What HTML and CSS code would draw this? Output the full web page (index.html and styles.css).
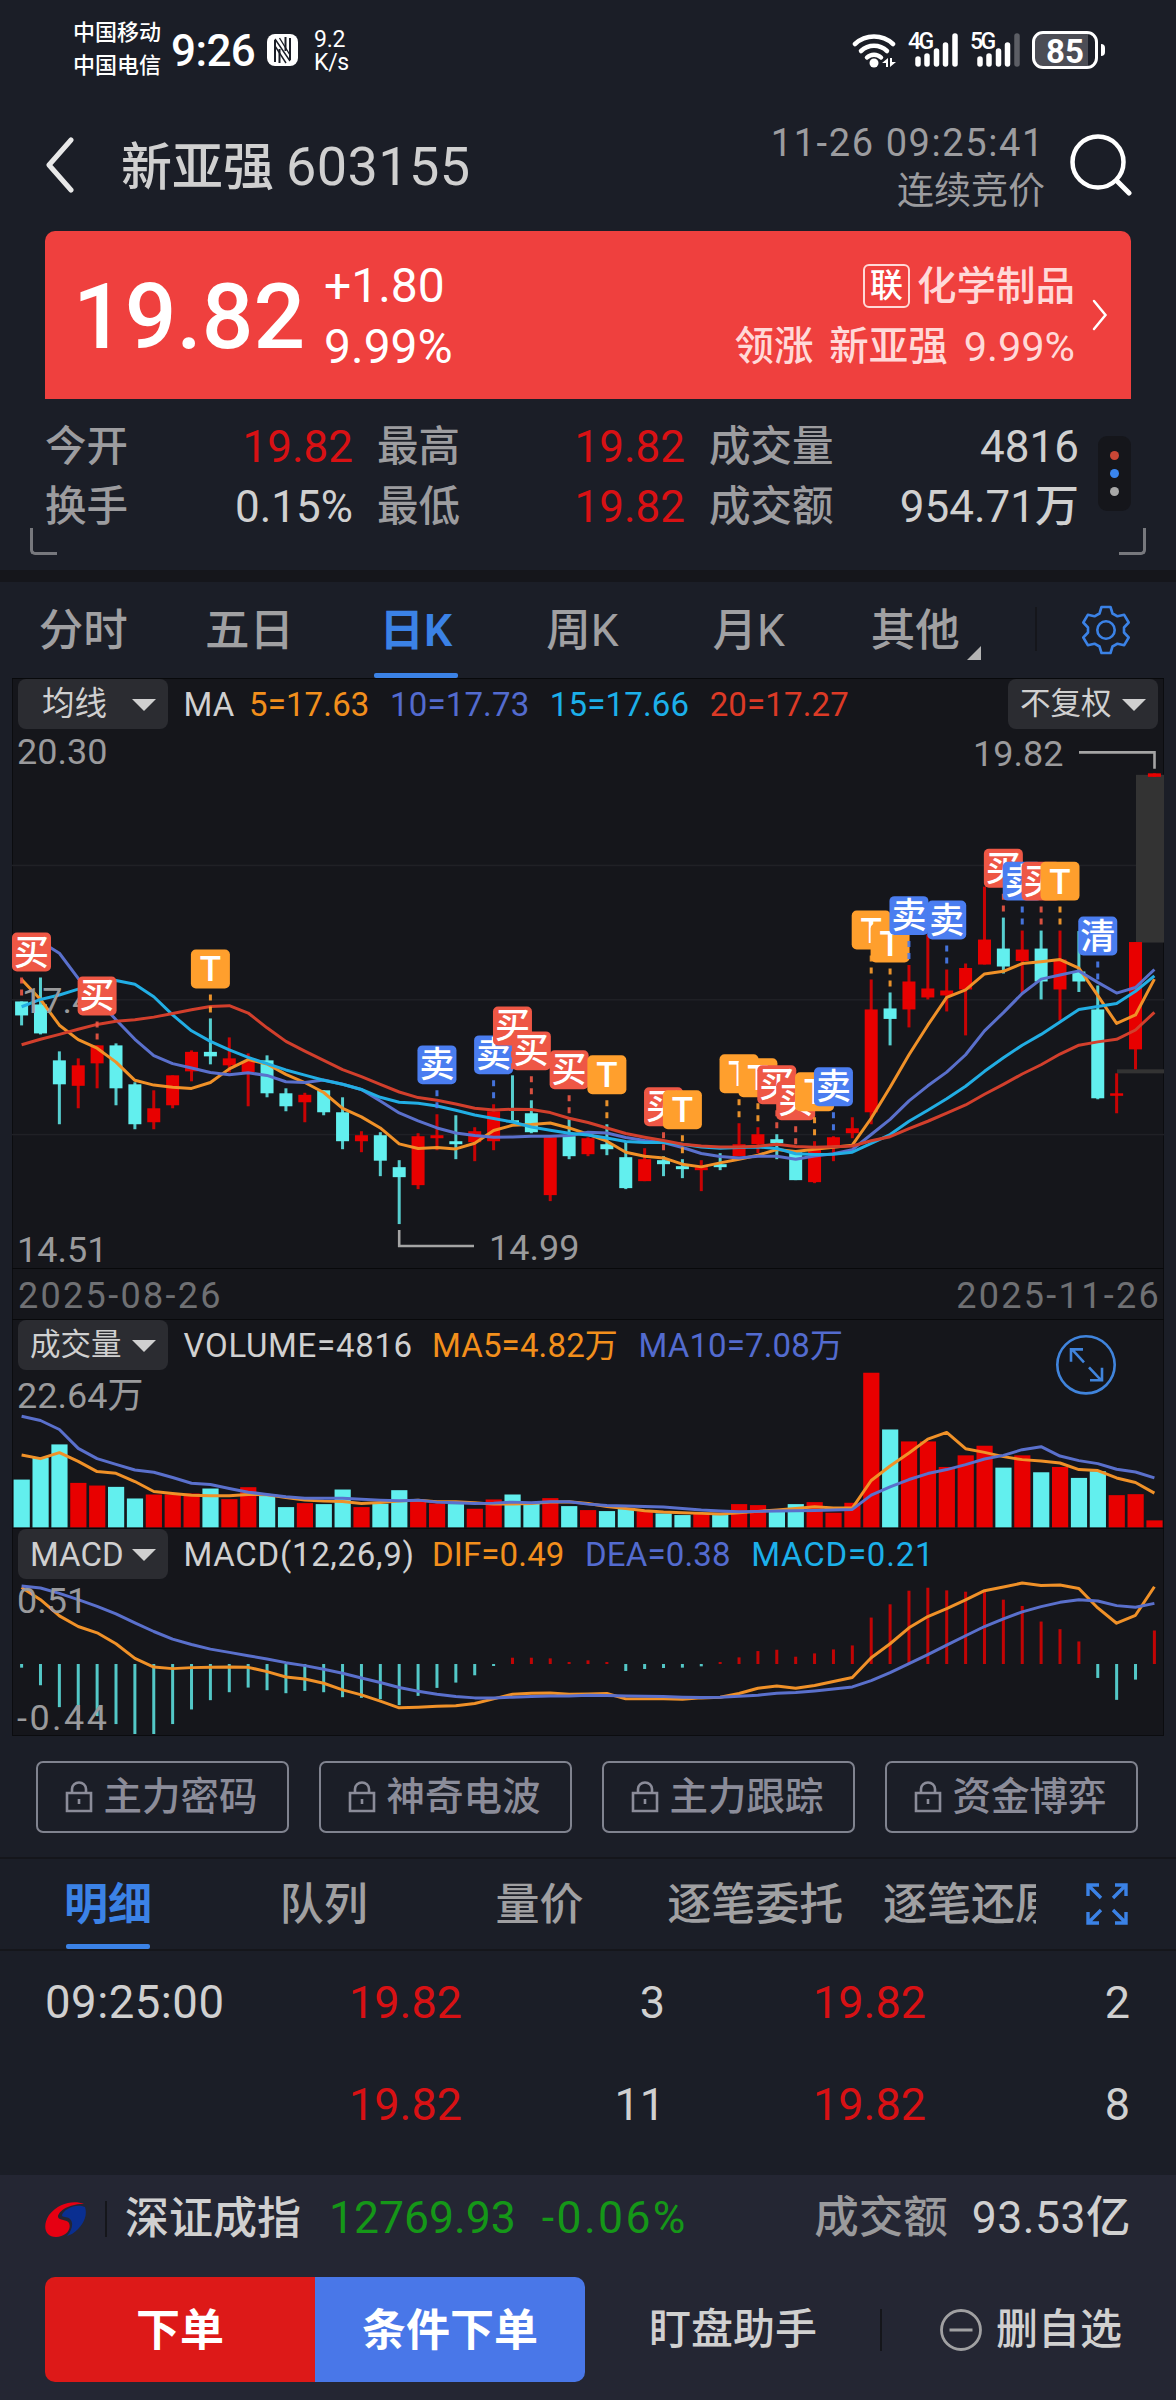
FILE: index.html
```html
<!DOCTYPE html>
<html lang="zh-CN">
  <head>
    <meta charset="UTF-8" />
    <meta name="viewport" content="width=device-width, initial-scale=1.0" />
    <title>新亚强 603155</title>
    <link rel="stylesheet" href="styles.css" />
  </head>
  <body>
    <div class="status-bar">
      <div class="carriers"><span>中国移动</span><span>中国电信</span></div>
      <span class="clock">9:26</span>
      <svg class="nfc" viewBox="0 0 31 32">
        <rect width="31" height="32" rx="8" fill="#fff" />
        <path d="M8 28V6M12.500 15v14M18.500 3v14M23 4v22" stroke="#1b1e27" stroke-width="2" />
        <path d="M8 5l15 22M12.500 4l10.500 17M8 12l11 17" stroke="#1b1e27" stroke-width="1.400" />
      </svg>
      <div class="net-speed"><span>9.2</span><span>K/s</span></div>
      <svg class="wifi" viewBox="0 0 46 36">
        <g fill="none" stroke="#fff" stroke-width="4.500" stroke-linecap="round">
          <path d="M3 12a28 28 0 0 1 38 0" />
          <path d="M9 19a19 19 0 0 1 26 0" />
          <path d="M15 25.500a10 10 0 0 1 14 0" />
        </g>
        <circle cx="22" cy="31" r="4.500" fill="#fff" />
        <path d="M30 31l6-5v9h-2v-4zM44 30l-6 5v-9h2v4z" fill="#fff" />
      </svg>
      <div class="signal">
        <span>4G</span>
        <svg viewBox="0 0 43 34">
          <path d="M3 26v5M12 23v8M21.500 18v13M30.500 12v19M40 3v28" stroke="#fff" stroke-width="5.500" stroke-linecap="round" />
        </svg>
      </div>
      <div class="signal signal-5g">
        <span>5G</span>
        <svg viewBox="0 0 43 34">
          <path d="M3 26v5M12 23v8M21.500 18v13M30.500 12v19" stroke="#fff" stroke-width="5.500" stroke-linecap="round" />
          <path d="M40 3v28" stroke="#5c5e65" stroke-width="5.500" stroke-linecap="round" />
        </svg>
      </div>
      <div class="battery"><span>85</span></div>
      <i class="battery-tip"></i>
    </div>

    <header class="title-bar">
      <svg class="back" viewBox="0 0 30 56">
        <path d="M26 3L4 28l22 25" fill="none" stroke="#e8e8e8" stroke-width="5" stroke-linecap="round" stroke-linejoin="round" />
      </svg>
      <h1><span>新亚强</span><span class="code">603155</span></h1>
      <div class="quote-time"><span class="time">11-26 09:25:41</span><span class="phase">连续竞价</span></div>
      <svg class="search" viewBox="0 0 62 62">
        <circle cx="28" cy="28" r="25.500" fill="none" stroke="#fff" stroke-width="4.500" />
        <path d="M47 47l12 12" stroke="#fff" stroke-width="5" stroke-linecap="round" />
      </svg>
    </header>

    <section class="price-card">
      <span class="price">19.82</span>
      <div class="change"><span>+1.80</span><span>9.99%</span></div>
      <div class="sector">
        <div><i class="link-tag">联</i>化学制品</div>
        <div class="leader">领涨 新亚强<b>9.99%</b></div>
      </div>
      <svg class="chevron" viewBox="0 0 16 32">
        <path d="M2 2l11.500 14L2 30" fill="none" stroke="#fff" stroke-width="2.500" stroke-linecap="round" />
      </svg>
    </section>

    <section class="stats">
      <div class="stats-grid">
        <div class="stat"><span>今开</span><b class="up">19.82</b></div>
        <div class="stat"><span>最高</span><b class="up">19.82</b></div>
        <div class="stat wide"><span>成交量</span><b>4816</b></div>
        <div class="stat"><span>换手</span><b>0.15%</b></div>
        <div class="stat"><span>最低</span><b class="up">19.82</b></div>
        <div class="stat wide"><span>成交额</span><b>954.71万</b></div>
      </div>
      <div class="dots"><i class="dot-red"></i><i class="dot-blue"></i><i></i></div>
      <i class="corner corner-left"></i>
      <i class="corner corner-right"></i>
    </section>

    <nav class="period-tabs">
      <a>分时</a><a>五日</a><a class="active">日K</a><a>周K</a><a>月K</a><a class="more">其他</a>
      <div class="settings">
        <svg viewBox="0 0 50 50">
          <path d="M20.500 2h9l2 6.500 5 2.800 6.700-1.500 4.500 7.700-4.700 5v5l4.700 5-4.500 7.700-6.700-1.500-5 2.800-2 6.500h-9l-2-6.500-5-2.800-6.700 1.500-4.500-7.700 4.700-5v-5l-4.700-5 4.500-7.700 6.700 1.500 5-2.800z" fill="none" stroke="#3b82e6" stroke-width="2.600" stroke-linejoin="round" />
          <circle cx="25" cy="25" r="8.700" fill="none" stroke="#3b82e6" stroke-width="2.600" />
        </svg>
      </div>
    </nav>

    <main class="charts">
      <section class="panel panel-k">
        <svg id="k-chart" viewBox="12 678 1152 590" preserveAspectRatio="none"></svg>
        <div class="legend">
          <button class="picker">均线<i></i></button>
          <span>MA</span><span class="c5">5=17.63</span><span class="c10">10=17.73</span><span class="c15">15=17.66</span><span class="c20">20=17.27</span>
          <button class="picker picker-right">不复权<i></i></button>
        </div>
      </section>
      <div class="dates"><span>2025-08-26</span><span>2025-11-26</span></div>
      <section class="panel panel-vol">
        <svg id="vol-chart" viewBox="12 1319 1152 209" preserveAspectRatio="none"></svg>
        <div class="legend">
          <button class="picker">成交量<i></i></button>
          <span class="wide-text">VOLUME=4816</span><span class="c5">MA5=4.82万</span><span class="c10">MA10=7.08万</span>
        </div>
      </section>
      <section class="panel panel-macd">
        <svg id="macd-chart" viewBox="12 1528 1152 208" preserveAspectRatio="none"></svg>
        <div class="legend">
          <button class="picker">MACD<i></i></button>
          <span class="wide-text">MACD(12,26,9)</span><span class="c5">DIF=0.49</span><span class="c10">DEA=0.38</span><span class="c15">MACD=0.21</span>
        </div>
      </section>
    </main>

    <section class="locked-row">
      <button><svg viewBox="0 0 28 32"><path d="M2 12h24v18H2zM7 12V8a7 6.500 0 0 1 14 0v4M14 18v5" /></svg>主力密码</button>
      <button><svg viewBox="0 0 28 32"><path d="M2 12h24v18H2zM7 12V8a7 6.500 0 0 1 14 0v4M14 18v5" /></svg>神奇电波</button>
      <button><svg viewBox="0 0 28 32"><path d="M2 12h24v18H2zM7 12V8a7 6.500 0 0 1 14 0v4M14 18v5" /></svg>主力跟踪</button>
      <button><svg viewBox="0 0 28 32"><path d="M2 12h24v18H2zM7 12V8a7 6.500 0 0 1 14 0v4M14 18v5" /></svg>资金博弈</button>
    </section>

    <nav class="detail-tabs">
      <div class="detail-scroll">
        <a class="active">明细</a><a>队列</a><a>量价</a><a>逐笔委托</a><a>逐笔还原</a>
      </div>
      <svg viewBox="0 0 42 42">
        <path d="M15 15L2 2M2 13V2h11M27 15L40 2M29 2h11v11M15 27L2 40M2 29v11h11M27 27l13 13M29 40h11V29" fill="none" stroke="#3b82e6" stroke-width="3.400" />
      </svg>
    </nav>

    <section class="ticks">
      <div class="tick"><span>09:25:00</span><b class="up">19.82</b><b>3</b><b class="up">19.82</b><b>2</b></div>
      <div class="tick"><span></span><b class="up">19.82</b><b>11</b><b class="up">19.82</b><b>8</b></div>
    </section>

    <footer class="footer">
      <div class="index-row">
        <svg class="logo" viewBox="0 0 42 36">
          <path d="M39 3C30-1 14 1 4 14-3 25 0 36 11 36c9 0 16-7 13-14-2-4-10-2-11-6 0-7 14-14 26-13z" fill="#e60012" />
          <path d="M40 6c3 9-2 20-13 27l-5 2c5-6 7-13 3-17-3-3-8-1-8-4 2-6 14-12 23-8z" fill="#0a2f91" />
        </svg>
        <i class="sep"></i>
        <span class="index-name">深证成指</span>
        <b class="down">12769.93</b>
        <b class="down pct">-0.06%</b>
        <span class="turnover">成交额</span>
        <b class="turnover-value">93.53亿</b>
      </div>
      <div class="action-row">
        <button class="order">下单</button><button class="cond-order">条件下单</button>
        <span class="helper">盯盘助手</span>
        <i class="sep"></i>
        <svg viewBox="0 0 42 42">
          <circle cx="21" cy="21" r="19.500" fill="none" stroke="#a0a0a2" stroke-width="2.800" />
          <path d="M9.500 21h23" stroke="#a0a0a2" stroke-width="3" />
        </svg>
        <span>删自选</span>
      </div>
    </footer>

    <script src="charts.js"></script>
  </body>
</html>
```

FILE: styles.css
```css
* {
  box-sizing: border-box;
}

body {
  margin: 0;
  width: 1176px;
  height: 2400px;
  overflow: hidden;
  background: #1b1e27;
  color: #d0d0d0;
  font-family: Roboto, "Noto Sans CJK SC", sans-serif;
  font-weight: 450;
  line-height: 1;
}

b {
  font-weight: inherit;
}

i {
  font-style: normal;
}

svg {
  display: block;
  flex: none;
}

button {
  padding: 0;
  border: none;
  font-family: inherit;
  font-weight: inherit;
  line-height: 1;
}

.up {
  color: #d81114;
}

.down {
  color: #159718;
}

/* status bar */
.status-bar {
  display: flex;
  align-items: center;
  height: 99px;
  padding-left: 73px;
  color: #fff;
}

.carriers {
  display: flex;
  flex-direction: column;
  gap: 11px;
  width: 98px;
  font-size: 22px;
  font-weight: 500;
}

.clock {
  width: 96px;
  padding-top: 2px;
  font-size: 44px;
  font-weight: 500;
  letter-spacing: -0.6px;
}

.nfc {
  width: 31px;
  height: 32px;
}

.net-speed {
  display: flex;
  flex-direction: column;
  width: 554px;
  padding: 3px 0 0 16px;
  font-size: 23px;
  letter-spacing: -0.3px;
}

.wifi {
  width: 46px;
  height: 36px;
  margin-right: 10px;
}

.signal {
  position: relative;
  width: 62px;
}

.signal span {
  position: absolute;
  left: 0;
  top: -3px;
  font-size: 23px;
  font-weight: 500;
  letter-spacing: -2.5px;
}

.signal svg {
  width: 43px;
  height: 34px;
  margin-left: 7px;
}

.battery {
  width: 66px;
  height: 38px;
  border: 3px solid #fff;
  border-radius: 11px;
  background: linear-gradient(90deg, #4c4d55 88%, #1b1e27 88%);
  font-size: 33px;
  font-weight: 700;
  line-height: 35px;
  text-align: center;
}

.battery-tip {
  width: 4px;
  height: 12px;
  margin-left: 3px;
  border-radius: 0 4px 4px 0;
  background: #fff;
}

/* title */
.title-bar {
  display: flex;
  align-items: center;
  height: 132px;
  padding-left: 45px;
}

.back {
  width: 30px;
  height: 56px;
}

.title-bar h1 {
  display: flex;
  align-items: center;
  width: 560px;
  margin: 0 0 0 46px;
  padding-top: 4px;
  font-size: 51px;
  font-weight: inherit;
}

.code {
  margin-left: 12px;
  font-size: 54px;
  letter-spacing: 0.4px;
}

.quote-time {
  display: flex;
  flex-direction: column;
  align-items: flex-end;
  gap: 11px;
  width: 364px;
  padding-top: 4px;
  color: #9c9c9f;
  font-size: 37px;
  font-weight: 400;
}

.time {
  font-size: 38px;
  letter-spacing: 1.6px;
}

.search {
  width: 62px;
  height: 62px;
  margin-left: 25px;
}

/* price card */
.price-card {
  display: flex;
  align-items: center;
  height: 168px;
  margin: 0 45px;
  padding: 0 23px 0 28px;
  border-radius: 10px 10px 0 0;
  background: #ef403e;
  color: #fff;
}

.price {
  width: 251px;
  padding-top: 5px;
  font-size: 91px;
  font-weight: 500;
}

.change {
  display: flex;
  flex-direction: column;
  gap: 13px;
  padding-top: 3px;
  font-size: 48px;
}

.sector {
  display: flex;
  flex-direction: column;
  align-items: flex-end;
  gap: 18px;
  margin-left: auto;
  padding-top: 2px;
  color: #ffd9d8;
  font-size: 39.5px;
}

.sector div {
  display: flex;
  align-items: center;
}

.sector b {
  margin-left: 16px;
  font-size: 41.5px;
}

.leader {
  word-spacing: 6px;
}

.link-tag {
  width: 47px;
  height: 44px;
  margin-right: 7px;
  border: 2px solid #ffd9d8;
  border-radius: 6px;
  color: #fff;
  font-size: 33px;
  line-height: 39px;
  text-align: center;
}

.chevron {
  width: 16px;
  height: 32px;
  margin-left: 17px;
}

/* stats */
.stats {
  position: relative;
  display: flex;
  justify-content: space-between;
  height: 183px;
  padding: 18px 45px 0;
  border-bottom: 12px solid #15161b;
}

.stats-grid {
  display: grid;
  grid-template-columns: 308px 308px 370px;
  grid-auto-rows: 60px;
  column-gap: 24px;
}

.stat {
  display: flex;
  align-items: center;
  justify-content: space-between;
  font-size: 44px;
}

.stat span {
  color: #9c9c9f;
  font-size: 41.5px;
}

.dots {
  display: flex;
  flex-direction: column;
  align-items: center;
  justify-content: center;
  gap: 9px;
  width: 33px;
  height: 75px;
  margin-top: 19px;
  border-radius: 9px;
  background: #15161b;
}

.dots i {
  width: 9px;
  height: 9px;
  border-radius: 50%;
  background: #a8a8a8;
}

.dots .dot-red {
  background: #c94736;
}

.dots .dot-blue {
  background: #3a86f0;
}

.corner {
  position: absolute;
  bottom: 15px;
  width: 27px;
  height: 27px;
  border-bottom: 3px solid #77787d;
}

.corner-left {
  left: 30px;
  border-left: 3px solid #77787d;
  border-radius: 0 0 0 5px;
}

.corner-right {
  right: 30px;
  border-right: 3px solid #77787d;
  border-radius: 0 0 5px 0;
}

/* period tabs */
.period-tabs {
  display: flex;
  height: 96px;
  font-size: 44.5px;
  color: #a0a0a2;
}

.period-tabs a {
  position: relative;
  display: flex;
  align-items: center;
  justify-content: center;
  width: 166.4px;
  padding-top: 2px;
}

.period-tabs .active,
.detail-tabs .active {
  color: #3b82e6;
  font-weight: 600;
}

.active::after {
  content: "";
  position: absolute;
  left: 50%;
  bottom: 0;
  width: 84px;
  height: 5px;
  margin-left: -42px;
  border-radius: 2px;
  background: #3b82e6;
}

.more::after {
  content: "";
  position: absolute;
  left: 135px;
  top: 64px;
  border-left: 14px solid transparent;
  border-bottom: 14px solid #b4b4b4;
}

.settings {
  display: flex;
  height: 44px;
  margin: 25px 0 0 37px;
  padding-left: 44px;
  border-left: 2px solid #15161b;
}

.settings svg {
  width: 50px;
  height: 50px;
  margin-top: -2px;
}

/* charts */
.charts {
  margin: 0 12px;
  background: #15161b;
  box-shadow: inset 0 0 0 1px #0b0c0f;
}

.panel {
  display: grid;
  border-top: 1px solid #08090b;
}

.panel > * {
  grid-area: 1 / 1;
}

.panel svg {
  width: 1152px;
  height: 100%;
}

.panel-k {
  height: 590px;
}

.panel-vol {
  height: 209px;
}

.panel-macd {
  height: 208px;
}

.legend {
  display: flex;
  align-items: center;
  gap: 20.5px;
  height: 50px;
  padding: 0 6px;
  font-size: 33px;
  font-weight: 400;
  letter-spacing: 0.15px;
}

.legend .picker + span {
  margin-left: -5px;
}

.legend .picker + span + span {
  margin-left: -6px;
}

.legend .picker + .wide-text + span {
  margin-left: 0;
}

.wide-text {
  width: 228px;
  letter-spacing: 0.7px;
}

.picker {
  display: flex;
  align-items: center;
  justify-content: space-between;
  width: 150px;
  height: 50px;
  padding: 1px 12px 0;
  border-radius: 8px;
  background: #2b2c31;
  color: #d0d0d0;
  font-size: 30.5px;
}

.panel-k .picker {
  padding-left: 24px;
  font-size: 32.5px;
}

.panel-k .picker-right {
  margin-left: auto;
  padding-left: 12px;
  font-size: 30.5px;
}

.panel-macd .picker {
  font-size: 33px;
}

.picker i {
  border: 12px solid transparent;
  border-top-color: #d0d0d0;
  border-bottom-width: 0;
}

.c5 {
  color: #f28f1c;
}

.c10 {
  color: #536bcf;
}

.c15 {
  color: #1cb0ea;
}

.panel-macd .c15 {
  letter-spacing: 0.8px;
}

.c20 {
  color: #dc3a26;
}

.dates {
  display: flex;
  align-items: center;
  justify-content: space-between;
  height: 51px;
  padding: 3px 3px 0 6px;
  border-top: 1px solid #08090b;
  color: #6f7073;
  font-size: 36px;
  font-weight: 400;
  letter-spacing: 2.3px;
}

.axis {
  fill: #9a9a9c;
  font-size: 36px;
  font-weight: 400;
}

.badge-text {
  fill: #fff;
  font-size: 35px;
  font-weight: 500;
  text-anchor: middle;
}

/* locked indicators */
.locked-row {
  display: flex;
  gap: 30px;
  height: 123px;
  padding: 25px 36px 0;
  border-bottom: 2px solid #15161b;
}

.locked-row button {
  display: flex;
  align-items: center;
  justify-content: center;
  gap: 10px;
  width: 253px;
  height: 72px;
  padding-right: 2px;
  border: 2px solid #80838f;
  border-radius: 7px;
  background: none;
  color: #8b8c99;
  font-size: 38.5px;
}

.locked-row svg {
  width: 28px;
  height: 32px;
  fill: none;
  stroke: #8b8c99;
  stroke-width: 2.6;
}

/* detail tabs */
.detail-tabs {
  display: flex;
  align-items: center;
  height: 92px;
  border-bottom: 2px solid #15161b;
  color: #a0a0a2;
  font-size: 44px;
}

.detail-scroll {
  display: flex;
  width: 1036px;
  height: 90px;
  overflow: hidden;
}

.detail-scroll a {
  position: relative;
  display: flex;
  flex: none;
  align-items: center;
  justify-content: center;
  width: 215.8px;
  padding-top: 2px;
}

.detail-tabs svg {
  width: 42px;
  height: 42px;
  margin-left: 50px;
}

/* ticks */
.ticks {
  height: 224px;
}

.tick {
  display: grid;
  grid-template-columns: 180px 237px 203px 261px 204px;
  align-items: center;
  height: 102px;
  padding: 1px 0 0 45px;
  font-size: 45px;
}

.tick span {
  font-size: 45.5px;
  letter-spacing: 0.5px;
}

.tick b {
  text-align: right;
}

/* footer */
.footer {
  height: 225px;
  padding: 0 45px;
  background: #242633;
}

.index-row {
  display: flex;
  align-items: center;
  height: 86px;
  padding-top: 1px;
  font-size: 44.5px;
}

.logo {
  width: 42px;
  height: 36px;
}

.sep {
  width: 2px;
  height: 36px;
  margin: 0 18px;
  background: #15161b;
}

.index-name {
  margin-right: 28px;
  font-size: 44px;
}

.pct {
  margin-left: 26px;
  letter-spacing: 2.4px;
}

.turnover {
  margin: 0 24px 0 auto;
  color: #9a9a9c;
}

.turnover-value {
  letter-spacing: 0.5px;
}

.action-row {
  display: flex;
  align-items: center;
  margin-top: 16px;
  font-size: 42px;
  font-weight: 500;
}

.action-row button {
  width: 270px;
  height: 105px;
  padding-top: 2px;
  color: #fff;
  font-size: 44px;
  font-weight: 700;
}

.order {
  border-radius: 10px 0 0 10px;
  background: #dd1918;
}

.cond-order {
  border-radius: 0 10px 10px 0;
  background: #4977e8;
}

.action-row span {
  padding-top: 1px;
}

.helper {
  margin-left: 64px;
}

.action-row .sep {
  height: 42px;
  margin: 0 58px 0 63px;
}

.action-row svg {
  width: 42px;
  height: 42px;
  margin-right: 14px;
}
```

FILE: charts.js
```js
const NS = "http://www.w3.org/2000/svg";
const UP = "#e80000";
const DOWN = "#62efee";
const STEP = 18.88;
const COLORS = { ma5: "#f09128", ma10: "#5a70cc", ma15: "#22aee4", ma20: "#d23f2c" };
const BADGES = { 买: "#ee5745", 卖: "#4a7df0", T: "#ff9f2d", 清: "#4a7df0" };

const cx = (i) => 21.6 + i * STEP;
const third = (v) => 1300 + v / 3;

function add(svg, tag, attrs, text) {
  const el = document.createElementNS(NS, tag);
  for (const key in attrs) el.setAttribute(key, attrs[key]);
  if (text) el.textContent = text;
  svg.appendChild(el);
}

function line(svg, ys, color) {
  const points = ys.map((y, i) => cx(i).toFixed(1) + "," + y.toFixed(1)).join(" ");
  add(svg, "polyline", { points, fill: "none", stroke: color, "stroke-width": 3, "stroke-linejoin": "round" });
}

function axisText(svg, x, y, text) {
  add(svg, "text", { x, y, class: "axis" }, text);
}

// [direction, high, body top, body bottom, low]
const candles = [
  [0, 1001, 1001, 1015, 1025], [0, 977, 1004, 1033, 1034], [0, 1051, 1060, 1084, 1124], [1, 1058, 1065, 1085.5, 1108],
  [1, 1045, 1045, 1063, 1088], [0, 1043, 1045, 1088, 1105], [0, 1082, 1084, 1124, 1129], [1, 1090, 1108, 1122, 1129],
  [1, 1075, 1075, 1105, 1108], [1, 1050, 1051.5, 1071, 1081], [0, 1018, 1051.5, 1056, 1064], [1, 1037, 1058, 1065, 1072],
  [1, 1053, 1061, 1072, 1106], [0, 1055, 1060, 1093, 1097], [0, 1088, 1093, 1106, 1111], [1, 1092.5, 1094.5, 1102, 1122],
  [0, 1090, 1090, 1112, 1115], [0, 1097, 1112, 1141, 1149], [1, 1131, 1135, 1141, 1152], [0, 1132, 1135, 1160.5, 1176],
  [0, 1160, 1167, 1177, 1224], [1, 1133, 1136, 1185, 1189], [1, 1114, 1135, 1138, 1150], [0, 1115, 1141, 1144, 1159],
  [1, 1127, 1131, 1142, 1161], [1, 1104, 1111, 1141, 1150], [0, 1075, 1120, 1122, 1120], [0, 1100, 1113, 1132, 1133],
  [1, 1136, 1137, 1195, 1201], [0, 1119, 1136, 1156, 1159], [1, 1137, 1138, 1154, 1156], [0, 1124, 1144, 1149, 1155],
  [0, 1141, 1157, 1188, 1189], [1, 1148, 1159, 1181, 1181], [0, 1156, 1160, 1164, 1176], [0, 1159, 1166, 1169, 1178],
  [1, 1160, 1167, 1170, 1191], [0, 1153, 1164, 1167, 1170], [1, 1123, 1144, 1156, 1156], [1, 1127, 1134, 1144, 1153],
  [0, 1134, 1139, 1143, 1159], [0, 1150, 1152, 1180, 1180], [1, 1141, 1149, 1182, 1183], [1, 1136, 1137, 1147, 1161],
  [1, 1117, 1128, 1133, 1138], [1, 979, 1009, 1112, 1124], [0, 992, 1008, 1018.5, 1045], [1, 964.5, 981, 1009, 1027],
  [1, 934, 988, 997, 999], [1, 969, 990, 995, 1011], [1, 963, 967.5, 989, 1035], [1, 886, 939, 964, 964],
  [0, 917, 948, 966, 973], [1, 930, 949, 960.5, 993], [0, 930, 948, 981, 999], [1, 930, 959, 989, 1020],
  [0, 930.5, 971, 981, 991.5], [0, 985, 1009, 1098, 1099], [1, 1073, 1093, 1095.5, 1113], [1, 941.5, 941.5, 1049, 1069],
  [1, 772.5, 772.5, 776, 776],
];

const ma5 = [
  979, 999, 1024.8, 1039.3, 1047.8, 1061.8, 1080, 1084.8, 1087, 1088.1, 1082.2, 1068.5, 1059.2, 1063.7, 1074, 1082.2,
  1092.2, 1108.1, 1116.6, 1127.7, 1143.7, 1148.3, 1147.3, 1148.7, 1143, 1130.3, 1125, 1124.3, 1122.7, 1127.7, 1134, 1141,
  1152, 1156, 1157.7, 1164, 1166.7, 1162.7, 1159, 1155, 1149.3, 1151.3, 1149.1, 1147, 1145, 1118, 1087, 1054.4, 1024.8,
  997, 989.3, 973.4, 970.8, 963, 961.2, 959, 967.5, 995.2, 1023, 1014.5, 978.6,
];
const ma10 = [
  938, 941, 952.7, 977.9, 999, 1019.3, 1038.9, 1055.2, 1063.3, 1067.7, 1072.2, 1074.4, 1072.5, 1075.1, 1081.4, 1082.2,
  1079.6, 1084, 1089.2, 1100.7, 1112.7, 1120.7, 1127.7, 1132.7, 1135.3, 1137, 1136.7, 1136, 1136, 1135.3, 1132, 1132.7,
  1137.3, 1140.3, 1142.3, 1147.3, 1153.3, 1156.3, 1157.7, 1156, 1156, 1159, 1155.8, 1153.5, 1149.5, 1134.3, 1119.1,
  1100.6, 1085.5, 1071.8, 1054.4, 1030.4, 1012.2, 993, 978.6, 974.5, 970.4, 981.9, 992.6, 987, 969,
];
const ma15 = [
  1006.3, 999, 994.5, 988.6, 982.3, 980, 983.8, 996.3, 1014.5, 1030.4, 1041, 1049.6, 1057, 1063.3, 1069.6, 1074.8, 1080,
  1084, 1089.2, 1097, 1102, 1103, 1105.7, 1110, 1114.7, 1118.3, 1121.7, 1126.7, 1130, 1133, 1134.7, 1137.7, 1141.3,
  1142.3, 1142.3, 1144, 1146.7, 1148, 1147.3, 1146.7, 1148.3, 1153.5, 1154.3, 1154, 1152, 1143.2, 1134.3, 1121, 1110,
  1098.4, 1085.9, 1071, 1057.4, 1044.8, 1034, 1021.5, 1009, 1006, 1003, 990.8, 975.3,
];
const ma20 = [
  1044.4, 1038.9, 1034, 1028.9, 1024, 1020.8, 1019.3, 1016.7, 1013, 1009.3, 1006, 1005.2, 1012.6, 1027.4, 1041, 1050.7,
  1060, 1069.2, 1076.3, 1084, 1091.7, 1097.3, 1100, 1103.7, 1108, 1109.7, 1109, 1109.3, 1112.3, 1118, 1122.3, 1127.7,
  1133.3, 1137, 1140.3, 1144, 1145.7, 1146.7, 1146.7, 1146, 1144, 1146.2, 1147, 1146.5, 1145.8, 1140.6, 1136.5, 1128.4,
  1121, 1112.9, 1104.7, 1094, 1084, 1073.7, 1064.4, 1053.7, 1044.8, 1041.5, 1038.9, 1029.6, 1011.9,
];

const trades = [
  [0, "买"], [4, "买"], [10, "T"], [22, "卖"], [25, "卖"], [26, "买"], [27, "买"], [29, "买"], [31, "T"], [34, "买"],
  [35, "T"], [38, "T"], [39, "T"], [40, "买"], [41, "买"], [42, "T"], [43, "卖"], [45, "T"], [46, "T"], [47, "卖"],
  [49, "卖"], [52, "买"], [53, "卖"], [54, "买"], [55, "T"], [57, "清"],
];

// volume and MACD levels are in thirds of a pixel
const volume = [
  538, 472, 432, 548, 556, 560, 595, 583, 583, 580, 565, 597, 561, 586, 621, 609, 612, 568, 621, 611, 570, 603, 610, 612,
  626, 598, 583, 610, 594, 618, 630, 633, 627, 634, 640, 645, 640, 645, 612, 615, 627, 612, 606, 638, 608, 216, 387, 423,
  423, 500, 465, 436, 502, 465, 516, 500, 533, 513, 585, 582, 661,
];
// indexes of the bars drawn in the falling colour
const volDown = [0, 1, 2, 5, 6, 10, 13, 14, 16, 17, 19, 20, 23, 26, 27, 29, 31, 32, 34, 35, 37, 40, 41, 46, 52, 54, 56, 57];
const volMa5 = [
  464, 475, 457, 483, 514, 519, 544, 574, 580, 585, 587, 587, 583, 584, 592, 600, 603, 604, 610, 607, 603, 600, 605, 605,
  608, 612, 612, 610, 606, 605, 610, 619, 625, 632, 636, 638, 640, 642, 638, 634, 630, 625, 620, 624, 624, 541, 497, 458,
  416, 396, 445, 456, 469, 478, 482, 488, 508, 511, 533, 547, 579,
];
const volMa10 = [
  347, 360, 387, 444, 475, 492, 509, 516, 532, 549, 553, 565, 576, 583, 590, 594, 594, 594, 597, 600, 602, 600, 606, 608,
  610, 609, 606, 608, 605, 605, 612, 616, 618, 619, 621, 625, 630, 633, 635, 634, 633, 632, 631, 630, 628, 585, 560, 538,
  520, 508, 493, 476, 465, 448, 439, 467, 481, 490, 507, 515, 533,
];
const macd = [
  1102, 1155, 1221, 1248, 1248, 1272, 1302, 1302, 1272, 1228, 1200, 1176, 1162, 1170, 1179, 1172, 1176, 1191, 1193, 1197,
  1215, 1187, 1163, 1147, 1125, 1097, 1072, 1072, 1074, 1085, 1080, 1085, 1112, 1106, 1103, 1102, 1098, 1085, 1071, 1052,
  1048, 1069, 1059, 1047, 1035, 951, 911, 870, 861, 869, 873, 873, 897, 916, 963, 986, 1023, 1133, 1199, 1138, 990,
];
const dif = [
  860, 897, 946, 978, 997, 1030, 1074, 1100, 1105, 1102, 1101, 1100, 1101, 1114, 1130, 1136, 1149, 1169, 1184, 1203, 1223,
  1221, 1218, 1217, 1210, 1196, 1182, 1179, 1178, 1182, 1181, 1180, 1196, 1196, 1196, 1197, 1193, 1191, 1180, 1164, 1157,
  1164, 1156, 1144, 1132, 1072, 1030, 982, 948, 924, 898, 870, 859, 847, 854, 853, 863, 922, 968, 944, 858,
];
const dea = [
  856, 862, 878, 897, 917, 940, 967, 993, 1016, 1032, 1046, 1056, 1066, 1076, 1087, 1096, 1107, 1119, 1133, 1147, 1162,
  1173, 1182, 1189, 1193, 1193, 1191, 1189, 1187, 1187, 1185, 1186, 1187, 1188, 1189, 1191, 1192, 1191, 1188, 1185, 1179,
  1177, 1172, 1166, 1160, 1141, 1117, 1090, 1063, 1034, 1006, 978, 955, 934, 918, 905, 897, 901, 915, 920, 908,
];

function drawK() {
  const svg = document.getElementById("k-chart");
  [864, 998.6, 1133.6].forEach((y) => add(svg, "rect", { x: 12, y, width: 1152, height: 1.5, fill: "#202126" }));
  // open gaps
  add(svg, "rect", { x: 1136, y: 774, width: 28, height: 168, fill: "#333" });
  add(svg, "rect", { x: 1117, y: 1069, width: 47, height: 4, fill: "#333" });

  candles.forEach(([up, high, top, bottom, low], i) => {
    const fill = up ? UP : DOWN;
    add(svg, "rect", { x: cx(i) - 1.5, y: high, width: 3, height: low - high, fill, opacity: 0.85 });
    add(svg, "rect", { x: cx(i) - 6.5, y: top, width: 13, height: bottom - top, fill });
  });
  line(svg, ma5, COLORS.ma5);
  line(svg, ma10, COLORS.ma10);
  line(svg, ma15, COLORS.ma15);
  line(svg, ma20, COLORS.ma20);

  axisText(svg, 17, 763, "20.30");
  axisText(svg, 22, 1013, "17.41");
  axisText(svg, 17, 1262, "14.51");
  axisText(svg, 489, 1260, "14.99");
  axisText(svg, 973, 765, "19.82");
  const pointer = { fill: "none", stroke: "#a4a4a4", "stroke-width": 2.6 };
  add(svg, "path", { d: "M399.200 1230v16H474", ...pointer });
  add(svg, "path", { d: "M1079 751.500h75.500V768", ...pointer });

  trades.forEach(([i, label]) => {
    const color = BADGES[label];
    const x = Math.max(cx(i) - 19.5, 12);
    const y = candles[i][1] - 69;
    add(svg, "path", { d: `M${cx(i)} ${y + 45}v18`, stroke: color, "stroke-width": 3, "stroke-dasharray": "6 6", opacity: 0.9 });
    add(svg, "rect", { x, y, width: 39, height: 39, rx: 5, fill: color });
    add(svg, "text", { x: x + 19.5, y: y + 32, class: "badge-text" }, label);
  });
}

function drawVolume() {
  const svg = document.getElementById("vol-chart");
  volume.forEach((v, i) => {
    const fill = volDown.includes(i) ? DOWN : UP;
    add(svg, "rect", { x: cx(i) - 8, y: third(v), width: 16.2, height: third(682) - third(v), fill });
  });
  line(svg, volMa5.map(third), COLORS.ma5);
  line(svg, volMa10.map(third), COLORS.ma10);
  axisText(svg, 17, 1407, "22.64万");

  const icon = { fill: "none", stroke: "#4084dc", "stroke-width": 2.6 };
  add(svg, "circle", { cx: 1086, cy: 1364, r: 28.7, ...icon });
  add(svg, "path", { d: "M1084 1361.500l-12-13M1071 1361v-12.500h12M1089 1366.500l12 13M1102 1367v12.500h-12", ...icon });
}

function drawMacd() {
  const svg = document.getElementById("macd-chart");
  const zero = 1091;
  macd.forEach((v, i) => {
    const fill = v > zero ? DOWN : UP;
    add(svg, "rect", { x: cx(i) - 1.5, y: third(Math.min(v, zero)), width: 3, height: Math.abs(v - zero) / 3, fill, opacity: 0.82 });
  });
  line(svg, dif.map(third), COLORS.ma5);
  line(svg, dea.map(third), COLORS.ma10);
  axisText(svg, 17, 1612, "0.51");
  add(svg, "text", { x: 17, y: 1730, class: "axis", textLength: 90 }, "-0.44");
}

drawK();
drawVolume();
drawMacd();
```
